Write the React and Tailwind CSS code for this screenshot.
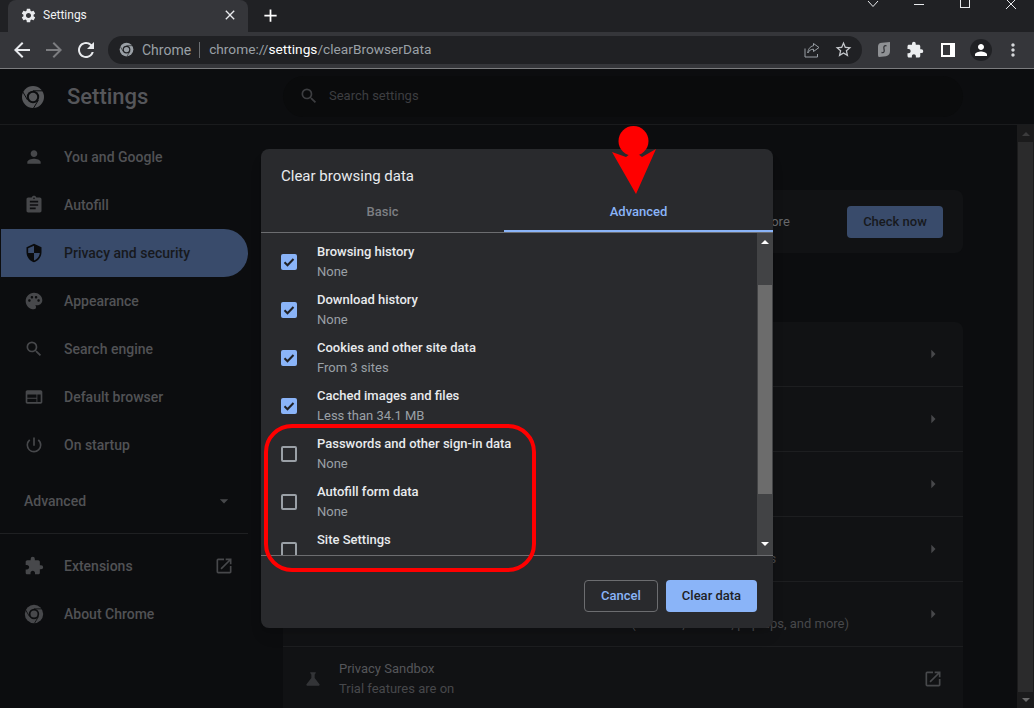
import React from "react";
import {
  MdPerson,
  MdAssignment,
  MdSecurity,
  MdPalette,
  MdSearch,
  MdWeb,
  MdPowerSettingsNew,
  MdExtension,
  MdOpenInNew,
  MdScience,
  MdSettings,
  MdClose,
  MdAdd,
  MdArrowBack,
  MdArrowForward,
  MdRefresh,
  MdStarBorder,
  MdArrowDropDown,
  MdArrowRight,
  MdMoreVert,
} from "react-icons/md";

const ChromeLogo = ({ className, ring, dot }) => (
  <svg viewBox="0 0 24 24" className={className}>
    <circle cx="12" cy="12" r="11" fill={ring} />
    <circle cx="12" cy="12" r="6.2" fill={dot} />
    <circle cx="12" cy="12" r="4.2" fill={ring} />
    <path d="M12 5.8h9.6M17.4 15.1l-4.8 7.9M6.6 15.1L1.9 7" stroke={dot} strokeWidth="1" fill="none" />
  </svg>
);

const navTop = [
  { label: "You and Google", icon: MdPerson },
  { label: "Autofill", icon: MdAssignment },
  { label: "Privacy and security", icon: MdSecurity, active: true },
  { label: "Appearance", icon: MdPalette },
  { label: "Search engine", icon: MdSearch },
  { label: "Default browser", icon: MdWeb },
  { label: "On startup", icon: MdPowerSettingsNew },
];

const settingRows = [
  { title: "Clear browsing data", sub: "Clear history, cookies, cache, and more" },
  { title: "Privacy Guide", sub: "Review key privacy and security controls" },
  { title: "Cookies and other site data", sub: "Third-party cookies are blocked in Incognito mode" },
  { title: "Security", sub: "Safe Browsing (protection from dangerous sites) and other security settings" },
  { title: "Site Settings", sub: "Controls what information sites can use and show (location, camera, pop-ups, and more)" },
];

const dataRows = [
  { title: "Browsing history", sub: "None", checked: true },
  { title: "Download history", sub: "None", checked: true },
  { title: "Cookies and other site data", sub: "From 3 sites", checked: true },
  { title: "Cached images and files", sub: "Less than 34.1 MB", checked: true },
  { title: "Passwords and other sign-in data", sub: "None" },
  { title: "Autofill form data", sub: "None" },
  { title: "Site Settings", sub: "None" },
];

const Tabs = () => (
  <div className="flex h-8 bg-[#202124] pl-2">
    <div className="flex h-8 w-[240px] items-center rounded-t-lg bg-[#35363a] pb-[2px] pl-3 pr-[10px]">
      <MdSettings className="text-[17px] text-[#e8eaed]" />
      <span className="ml-[6px] flex-1 text-xs text-[#f1f3f4]">Settings</span>
      <MdClose className="text-base text-[#e8eaed]" />
    </div>
    <div className="ml-3 flex items-center pb-[2px]">
      <MdAdd className="text-[21px] text-white" />
    </div>
    <div className="flex-1" />
    <div className="flex w-[184px] items-start text-[#e8eaed]">
      <div className="flex w-[46px] justify-center">
        <svg viewBox="0 0 12 8" className="h-2 w-3 fill-none stroke-current"><path d="M1 1l5 5.500L11 1" /></svg>
      </div>
      <div className="flex w-[46px] justify-center pt-1">
        <div className="h-px w-[10px] bg-current" />
      </div>
      <div className="flex w-[46px] justify-center">
        <div className="h-2 w-[10px] border border-t-0 border-current" />
      </div>
      <div className="flex w-[46px] justify-center">
        <svg viewBox="0 0 12 9" className="h-[9px] w-3 fill-none stroke-current"><path d="M1 -1l10 10M11 -1L1 9" /></svg>
      </div>
    </div>
  </div>
);

const Toolbar = () => (
  <div className="flex h-[37px] items-center border-b border-[#7b7c7e] bg-[#35363a] pb-px pl-[10px]">
    <MdArrowBack className="text-2xl text-[#e8eaed]" />
    <MdArrowForward className="ml-2 text-2xl text-[#7c7d80]" />
    <MdRefresh className="ml-2 text-2xl text-[#e8eaed]" />
    <div className="ml-[10px] flex h-7 w-[754px] items-center rounded-full bg-[#202124] pl-[11px] pr-[9px]">
      <ChromeLogo className="h-[15px] w-[15px]" ring="#9aa0a6" dot="#202124" />
      <span className="ml-2 text-sm text-[#9aa0a6]">Chrome</span>
      <div className="ml-2 h-4 w-px bg-[#6b6e72]" />
      <span className="ml-[9px] flex-1 text-[13.7px] text-[#9aa0a6]">
        chrome://<span className="text-white">settings</span>/clearBrowserData
      </span>
      <svg viewBox="0 0 16 16" className="h-4 w-4 fill-none stroke-[#9aa0a6]">
        <path d="M1 6.500v8.500h12.500v-3" />
        <path d="M9.500 1.500L15 5.500l-5.500 4V7.200C7 7.200 5 8.500 3.800 11 4 7.500 6 4.200 9.500 3.800z" />
      </svg>
      <MdStarBorder className="ml-[14px] text-[19px] text-[#c4c7cb]" />
    </div>
    <svg viewBox="0 0 12 15" className="ml-4 h-[15px] w-3">
      <path d="M0 4.500Q0 1 4 .8L12 0v9q0 4.500-4 5.200L1 15Q0 15 0 13z" fill="#8f9194" />
      <path d="M8.500 3.800C6 3 5.500 5 6 7s.5 4-2.500 3.500" fill="none" stroke="#35363a" strokeWidth="1.300" />
    </svg>
    <MdExtension className="ml-4 text-[18px] text-[#eceef0]" />
    <div className="ml-[17px] flex h-[14px] w-[14px] items-center justify-start bg-white pl-[2px]">
      <div className="h-[10px] w-[7px] bg-[#35363a]" />
    </div>
    <div className="ml-[15px] flex h-[22px] w-[22px] items-center justify-center rounded-full bg-[#202124]">
      <MdPerson className="text-lg text-white" />
    </div>
    <MdMoreVert className="ml-[11px] text-[20px] text-[#d6d8db]" />
  </div>
);

const Header = () => (
  <div className="flex h-[56px] items-center border-b border-[#1a1b1d] bg-[#0c0d0f]">
    <div className="flex w-[283px] items-center pl-[21px]">
      <ChromeLogo className="h-6 w-6" ring="#56575a" dot="#0c0d0f" />
      <span className="ml-[22px] text-[22px] font-medium text-[#55565a]">Settings</span>
    </div>
    <div className="flex h-[41px] w-[680px] items-center rounded-full bg-[#0a0b0c] pb-[2px] pl-[15px]">
      <MdSearch className="ml-px text-xl text-[#3d3e41]" />
      <span className="ml-[10px] text-[13px] text-[#3d3e41]">Search settings</span>
    </div>
  </div>
);

const Sidebar = () => (
  <div className="w-[248px] shrink-0 pt-2">
    {navTop.map(({ label, icon: Icon, active }) => (
      <div
        key={label}
        className={
          active
            ? "ml-px flex h-12 items-center rounded-r-full bg-[#394b6b] pl-[23px] text-[#17191d]"
            : "flex h-12 items-center pl-6 text-[#515255]"
        }
      >
        <Icon className={active ? "text-xl text-[#0a0b0d]" : "text-xl text-[#47484b]"} />
        <span className="ml-5 text-sm font-medium">{label}</span>
      </div>
    ))}
    <div className="flex h-[65px] items-center justify-between border-b border-[#1f2022] pl-6 pr-[14px] text-[#515255]">
      <span className="text-sm font-medium">Advanced</span>
      <MdArrowDropDown className="text-xl text-[#47484b]" />
    </div>
    <div className="mt-2">
      <div className="flex h-12 items-center pl-6 pr-[14px] text-[#515255]">
        <MdExtension className="text-xl text-[#47484b]" />
        <span className="ml-5 flex-1 text-sm font-medium">Extensions</span>
        <MdOpenInNew className="text-xl text-[#47484b]" />
      </div>
      <div className="flex h-12 items-center pl-6 text-[#515255]">
        <ChromeLogo className="h-5 w-5" ring="#47484b" dot="#0c0d0f" />
        <span className="ml-5 text-sm font-medium">About Chrome</span>
      </div>
    </div>
  </div>
);

const MainColumn = () => (
  <div className="ml-[35px] w-[680px] shrink-0 pt-[65px]">
    <div className="flex h-[63px] items-center rounded-lg bg-[#111214] pl-[56px] pr-5">
      <span className="flex-1 text-[13px] text-[#66676a]">
        Chrome can help keep you safe from data breaches, bad extensions, and more
      </span>
      <div className="flex h-8 w-[96px] items-center justify-center rounded bg-[#394b6b] text-[13px] font-medium text-[#17191d]">
        Check now
      </div>
    </div>
    <div className="mt-[69px] rounded-t-lg bg-[#111214]">
      {settingRows.map((row) => (
        <div key={row.title} className="flex h-[65px] items-center border-b border-[#1d1e20] pl-[56px] pr-5">
          <div className="flex-1">
            <div className="text-[13px] text-[#55565a]">{row.title}</div>
            <div className="text-[13px] leading-5 text-[#47484b]">{row.sub}</div>
          </div>
          <MdArrowRight className="text-xl text-[#47484b]" />
        </div>
      ))}
      <div className="flex h-[64px] items-center pl-5 pr-5">
        <MdScience className="text-xl text-[#333437]" />
        <div className="ml-4 flex-1">
          <div className="text-[13px] leading-5 text-[#55565a]">Privacy Sandbox</div>
          <div className="text-[13px] leading-5 text-[#47484b]">Trial features are on</div>
        </div>
        <MdOpenInNew className="text-xl text-[#47484b]" />
      </div>
    </div>
  </div>
);

const PageScrollbar = () => (
  <div className="ml-auto flex w-[17px] flex-col items-center bg-[#1b1b1c]">
    <div className="mt-[7px] h-0 w-0 border-x-4 border-b-4 border-x-transparent border-b-[#3b3b3c]" />
    <div className="mt-[6px] w-[15px] flex-1 bg-[#2b2b2c]" />
    <div className="my-[6px] h-0 w-0 border-x-4 border-t-4 border-x-transparent border-t-[#6a6a6b]" />
  </div>
);

const DataRow = ({ title, sub, checked }) => (
  <div className="flex h-12 shrink-0 items-center pl-5">
    {checked ? (
      <div className="flex h-4 w-4 items-center justify-center rounded-[2px] bg-[#8ab4f8]">
        <svg viewBox="0 0 16 16" className="h-4 w-4 fill-none stroke-[#202124] stroke-2">
          <path d="M3.500 8.300l3 3 6-6.300" />
        </svg>
      </div>
    ) : (
      <div className="h-4 w-4 rounded-[2px] border-2 border-[#9aa0a6]" />
    )}
    <div className="ml-5">
      <div className="text-[13px] font-medium leading-5 text-[#e8eaed]">{title}</div>
      <div className="text-[13px] leading-5 text-[#9aa0a6]">{sub}</div>
    </div>
  </div>
);

const ClearDialog = () => (
  <div className="absolute left-[261px] top-[149px] flex h-[479px] w-[512px] flex-col rounded-lg bg-[#292a2d] shadow-lg">
    <div className="px-5 pt-[17px] text-[15px] leading-5 text-[#e8eaed]">Clear browsing data</div>
    <div className="mt-[7px] flex h-[40px] shrink-0 border-b border-[#6c6d70] text-[13px] font-medium">
      <div className="flex flex-1 items-center justify-center pb-[2px] text-[#7d7f83]">Basic</div>
      <div className="flex w-[269px] items-center justify-center border-b-2 border-[#8ab4f8] text-[#8ab4f8]">Advanced</div>
    </div>
    <div className="flex h-[323px] shrink-0 border-b border-[#6c6d70]">
      <div className="flex-1 overflow-hidden pt-[5px]">
        {dataRows.map((row) => (
          <DataRow key={row.title} {...row} />
        ))}
      </div>
      <div className="flex w-4 flex-col items-center bg-[#424345]">
        <div className="mt-[7px] h-0 w-0 border-x-[4px] border-b-[4px] border-x-transparent border-b-white" />
        <div className="mt-[41px] h-[209px] w-[14px] bg-[#6c6c6c]" />
        <div className="mt-[48px] h-0 w-0 border-x-[4px] border-t-[4px] border-x-transparent border-t-white" />
      </div>
    </div>
    <div className="flex justify-end gap-2 pr-4 pt-6">
      <div className="flex h-8 w-[74px] items-center justify-center rounded border border-[#6c6d70] text-[13px] font-medium text-[#8ab4f8]">
        Cancel
      </div>
      <div className="flex h-8 w-[91px] items-center justify-center rounded bg-[#8ab4f8] text-[13px] font-medium text-[#202124]">
        Clear data
      </div>
    </div>
  </div>
);

export default function App() {
  return (
    <div className="relative h-[708px] w-[1034px] overflow-hidden bg-[#0c0d0f] font-['Roboto',sans-serif]">
      <Tabs />
      <Toolbar />
      <Header />
      <div className="flex h-[583px] overflow-hidden">
        <Sidebar />
        <MainColumn />
        <PageScrollbar />
      </div>
      <ClearDialog />

      {/* red markup drawn over the screenshot */}
      <div className="absolute left-[264px] top-[424px] h-[148px] w-[272px] rounded-[28px] border-4 border-[#f00]" />
      <svg viewBox="0 0 60 80" className="absolute left-[604px] top-[120px] h-20 w-[60px]">
        <circle cx="29.500" cy="21" r="15" fill="#f00" />
        <path d="M8 32l14 5 4-3h8l4 3 14-8L32 74z" fill="#f00" />
      </svg>
    </div>
  );
}
